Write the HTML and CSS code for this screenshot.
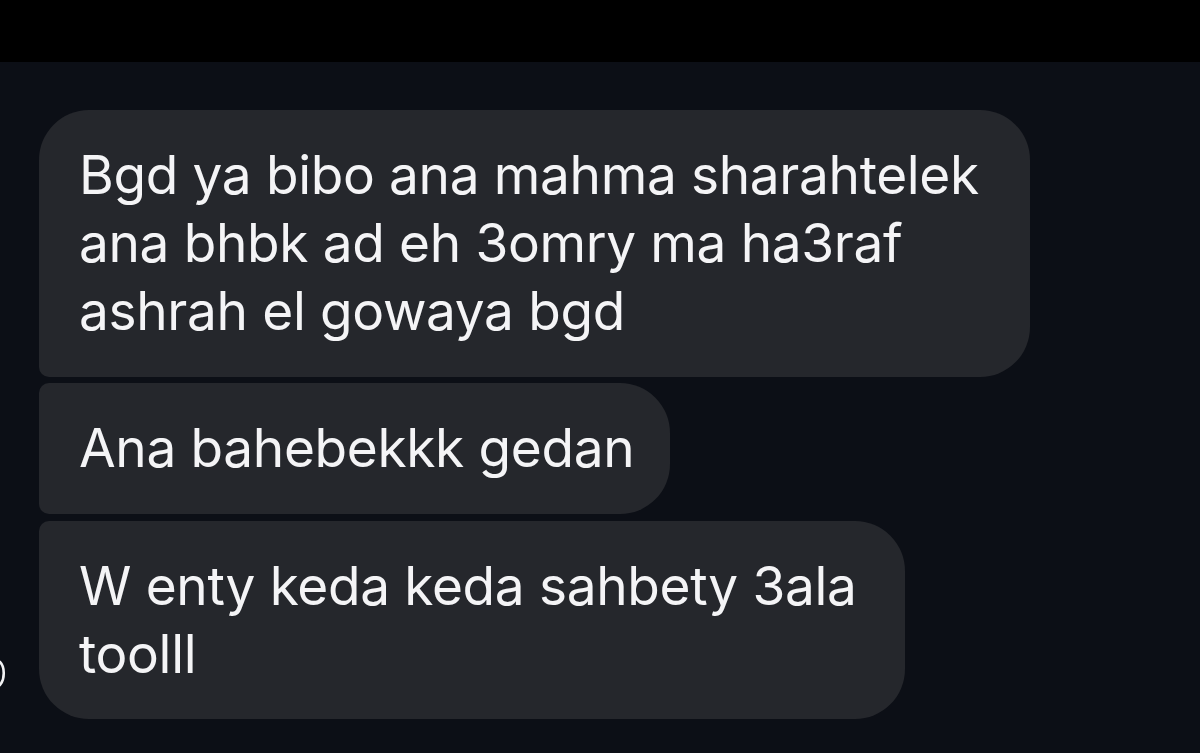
FILE: index.html
```html
<!DOCTYPE html>
<html lang="en">
<head>
<meta charset="utf-8">
<title>Messages</title>
<link rel="stylesheet" href="styles.css">
</head>
<body>
<div class="screen">
  <div class="topbar"></div>
  <main class="thread">
    <svg class="avatar-edge" width="8" height="30" viewBox="0 0 8 30" aria-hidden="true">
      <path d="M0 3 C5 8 5 20 0 26" fill="none" stroke="#f2f2f4" stroke-width="2.6" stroke-linecap="round"/>
    </svg>
    <div class="bubble b-first w1">Bgd ya bibo ana mahma sharahtelek<br>ana bhbk ad eh 3omry ma ha3raf<br>ashrah el gowaya bgd</div>
    <div class="bubble b-mid w2">Ana bahebekkk gedan</div>
    <div class="bubble b-last w3">W enty keda keda sahbety 3ala<br>toolll</div>
  </main>
</div>
</body>
</html>
```

FILE: styles.css
```css
* { box-sizing: border-box; }
html, body { margin: 0; padding: 0; }
body {
  background: #0c0f16;
  width: 1200px;
  height: 753px;
  overflow: hidden;
  font-family: "Inter", "Liberation Sans", sans-serif;
}
.screen {
  display: flex;
  flex-direction: column;
  height: 753px;
}
.topbar {
  height: 62px;
  background: #000000;
  flex: none;
}
.thread {
  position: relative;
  flex: 1;
  display: flex;
  flex-direction: column;
  align-items: flex-start;
  gap: 6.8px;
  padding: 48px 0 0 39px;
  background: #0c0f16;
}
.bubble {
  background: #25272c;
  color: #f4f4f6;
  font-size: 53.2px;
  line-height: 68px;
  letter-spacing: -0.35px;
  padding: 31px 20px 31.5px 40px;
  white-space: nowrap;
  border-radius: 50px;
}
.b-first { border-bottom-left-radius: 10px; }
.b-mid { border-top-left-radius: 10px; border-bottom-left-radius: 10px; }
.b-last { border-top-left-radius: 10px; }
.w1 { width: 991px; }
.w2 { width: 631px; }
.w3 { width: 866px; }
.avatar-edge {
  position: absolute;
  left: 0;
  top: 597px;
}
```
